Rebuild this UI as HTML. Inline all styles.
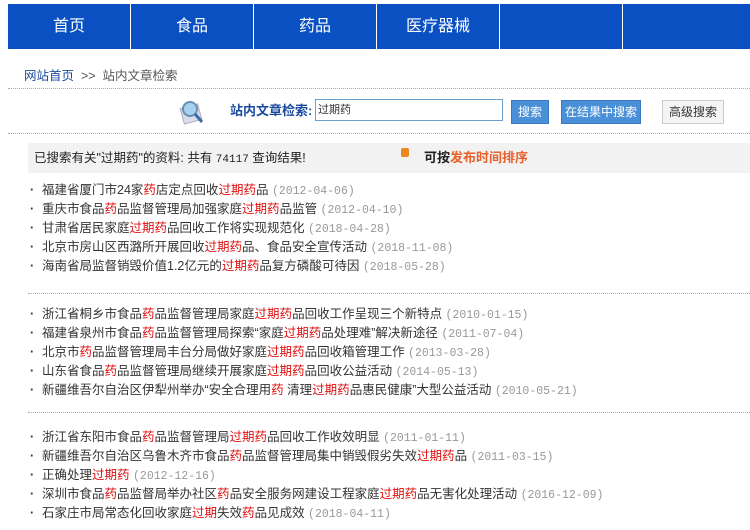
<!DOCTYPE html>
<html><head><meta charset="utf-8"><style>
body{margin:0;width:750px;height:530px;overflow:hidden;background:#fff;font-family:"Liberation Sans","Noto Sans CJK SC",sans-serif;font-size:12px;color:#333;position:relative}
.nav{position:absolute;left:8px;top:4px;width:760px;height:45px;background:#0a50c2;display:flex}
.nav div{width:122px;border-right:1px solid #fff;color:#fff;font-size:16px;text-align:center;line-height:45px;flex:none}
.bc{position:absolute;left:24px;top:65px;font-size:12.5px;color:#555}
.bc a{color:#1a4aa0}
.dot{position:absolute;left:8px;right:0;border-top:1px dotted #aaa;height:0}
.s{position:absolute;top:98px;height:26px;line-height:26px}
.btn{position:absolute;top:100px;height:22px;line-height:22px;font-size:12px;text-align:center}
.hd{position:absolute;left:28px;top:143px;width:730px;height:30px;background:#f2f2f2;line-height:30px;font-size:12.5px;color:#222}
ul{position:absolute;left:30px;margin:0;padding:0;list-style:none;font-size:12.5px}
li{height:19px;line-height:19px;color:#333;white-space:nowrap}
li:before{content:"·";display:inline-block;width:12px;font-weight:bold}
.r{color:#e01010}
.d{color:#999;font-family:"Liberation Mono",monospace;font-size:11.5px}
</style></head><body>
<div class="nav"><div>首页</div><div>食品</div><div>药品</div><div>医疗器械</div><div></div></div>
<div class="bc"><a>网站首页</a> &nbsp;&gt;&gt;&nbsp; 站内文章检索</div>
<div class="dot" style="top:88px"></div>
<svg style="position:absolute;left:178px;top:98px" width="28" height="28"><rect x="4" y="8" width="18" height="16" fill="#d8dde8" stroke="#aab" transform="rotate(-15 13 16)"/><circle cx="12" cy="11" r="7" fill="#a8d0f0" stroke="#6a90b0" stroke-width="2"/><path d="M17 16l7 8" stroke="#3a6ab0" stroke-width="3"/></svg>
<div class="s" style="left:230px;color:#1a4aa0;font-weight:bold;font-size:13px">站内文章检索:</div>
<div style="position:absolute;left:315px;top:99px;width:184px;height:20px;border:1px solid #6a9fd0;line-height:20px;font-size:11px;padding-left:2px">过期药</div>
<div class="btn" style="left:511px;width:36px;background:#4a90d8;color:#fff;border:1px solid #3a78c0">搜索</div>
<div class="btn" style="left:561px;width:78px;background:#4a90d8;color:#fff;border:1px solid #3a78c0">在结果中搜索</div>
<div class="btn" style="left:662px;width:60px;background:#f4f4f4;color:#333;border:1px solid #ccc">高级搜索</div>
<div class="dot" style="top:133px"></div>
<div class="hd"><span style="margin-left:6px">已搜索有关"过期药"的资料: 共有 <span style="font-family:'Liberation Mono',monospace;font-size:11px">74117</span> 查询结果!</span>
<span style="position:absolute;left:373px;top:5px;width:8px;height:9px;background:#e88a20;border-radius:2px"></span>
<span style="position:absolute;left:396px;font-weight:bold;font-size:13px">可按<span style="color:#e8602a">发布时间排序</span></span></div>
<ul style="top:181px">
<li>福建省厦门市24家<span class="r">药</span>店定点回收<span class="r">过期药</span>品 <span class="d">(2012-04-06)</span></li>
<li>重庆市食品<span class="r">药</span>品监督管理局加强家庭<span class="r">过期药</span>品监管 <span class="d">(2012-04-10)</span></li>
<li>甘肃省居民家庭<span class="r">过期药</span>品回收工作将实现规范化 <span class="d">(2018-04-28)</span></li>
<li>北京市房山区西潞所开展回收<span class="r">过期药</span>品、食品安全宣传活动 <span class="d">(2018-11-08)</span></li>
<li>海南省局监督销毁价值1.2亿元的<span class="r">过期药</span>品复方磷酸可待因 <span class="d">(2018-05-28)</span></li>
</ul>
<div class="dot" style="top:293px;left:28px"></div>
<ul style="top:305px">
<li>浙江省桐乡市食品<span class="r">药</span>品监督管理局家庭<span class="r">过期药</span>品回收工作呈现三个新特点 <span class="d">(2010-01-15)</span></li>
<li>福建省泉州市食品<span class="r">药</span>品监督管理局探索“家庭<span class="r">过期药</span>品处理难”解决新途径 <span class="d">(2011-07-04)</span></li>
<li>北京市<span class="r">药</span>品监督管理局丰台分局做好家庭<span class="r">过期药</span>品回收箱管理工作 <span class="d">(2013-03-28)</span></li>
<li>山东省食品<span class="r">药</span>品监督管理局继续开展家庭<span class="r">过期药</span>品回收公益活动 <span class="d">(2014-05-13)</span></li>
<li>新疆维吾尔自治区伊犁州举办“安全合理用<span class="r">药</span> 清理<span class="r">过期药</span>品惠民健康”大型公益活动 <span class="d">(2010-05-21)</span></li>
</ul>
<div class="dot" style="top:412px;left:28px"></div>
<ul style="top:428px">
<li>浙江省东阳市食品<span class="r">药</span>品监督管理局<span class="r">过期药</span>品回收工作收效明显 <span class="d">(2011-01-11)</span></li>
<li>新疆维吾尔自治区乌鲁木齐市食品<span class="r">药</span>品监督管理局集中销毁假劣失效<span class="r">过期药</span>品 <span class="d">(2011-03-15)</span></li>
<li>正确处理<span class="r">过期药</span> <span class="d">(2012-12-16)</span></li>
<li>深圳市食品<span class="r">药</span>品监督局举办社区<span class="r">药</span>品安全服务网建设工程家庭<span class="r">过期药</span>品无害化处理活动 <span class="d">(2016-12-09)</span></li>
<li>石家庄市局常态化回收家庭<span class="r">过期</span>失效<span class="r">药</span>品见成效 <span class="d">(2018-04-11)</span></li>
</ul>
</body></html>
